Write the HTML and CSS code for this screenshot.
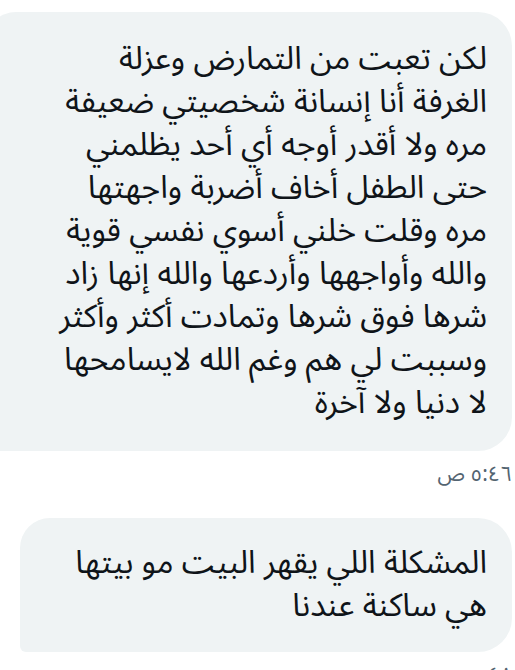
FILE: index.html
```html
<!DOCTYPE html>
<html lang="ar" dir="rtl">
<head>
    <meta charset="UTF-8">
    <meta name="viewport" content="width=device-width, initial-scale=1.0">
    <title>محادثة</title>
    <link rel="stylesheet" href="styles.css">
</head>
<body>
    <div class="chat">
        <div class="message">
            <div class="bubble bubble-long">
                لكن تعبت من التمارض وعزلة<br>
                الغرفة أنا إنسانة شخصيتي ضعيفة<br>
                مره ولا أقدر أوجه أي أحد يظلمني<br>
                حتى الطفل أخاف أضربة واجهتها<br>
                مره وقلت خلني أسوي نفسي قوية<br>
                والله وأواجهها وأردعها والله إنها زاد<br>
                شرها فوق شرها وتمادت أكثر وأكثر<br>
                وسببت لي هم وغم الله لايسامحها<br>
                لا دنيا ولا آخرة
            </div>
            <div class="time">٥:٤٦ ص</div>
        </div>
        <div class="message">
            <div class="bubble bubble-short">
                المشكلة اللي يقهر البيت مو بيتها<br>
                هي ساكنة عندنا
            </div>
            <div class="time">٥:٤٨ ص</div>
        </div>
    </div>
</body>
</html>
```

FILE: styles.css
```css
body {
    margin: 0;
    background-color: #ffffff;
    font-family: "Noto Sans Arabic", "DejaVu Sans", sans-serif;
    color: #0f1419;
    overflow: hidden;
}
.chat {
    display: flex;
    flex-direction: column;
    padding: 12px 3px 0 0;
}
.message {
    display: flex;
    flex-direction: column;
    margin-bottom: 32px;
}
.bubble {
    box-sizing: border-box;
    background-color: #eff3f4;
    border-radius: 30px 34px 34px 6px;
    padding: 26px 25px 26px 30px;
    font-size: 32px;
    line-height: 43px;
    text-align: right;
}
.bubble-long {
    margin-left: -14px;
}
.bubble-short {
    margin-left: 20px;
    padding-top: 24px;
    padding-bottom: 24px;
}
.time {
    margin-top: 11px;
    padding-left: 2px;
    font-size: 21px;
    line-height: 24px;
    color: #536471;
}
```
